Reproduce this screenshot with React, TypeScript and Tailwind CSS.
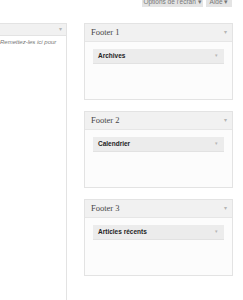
export default function App() {
  const footers = [
    { title: 'Footer', num: '1', widget: 'Archives' },
    { title: 'Footer', num: '2', widget: 'Calendrier' },
    { title: 'Footer', num: '3', widget: 'Articles récents' },
  ];

  return (
    <div className="w-[243px] h-[300px] bg-white overflow-hidden flex flex-col font-['Liberation_Sans',Arial,sans-serif]">
      {/* screen options / help tabs, cut at the top */}
      <div className="h-[23px] flex justify-end items-start gap-[3px] pr-[11px]">
        <div className="-mt-[4px] h-[11px] w-[61px] bg-[#e4e4e4] text-[#777] text-[6.5px] leading-[7px] whitespace-nowrap flex items-end justify-center pb-[2px]">
          Options de l’écran ▾
        </div>
        <div className="-mt-[4px] h-[11px] w-[26px] bg-[#e4e4e4] text-[#777] text-[6.5px] leading-[7px] whitespace-nowrap flex items-end justify-center pb-[2px]">
          Aide ▾
        </div>
      </div>

      <div className="flex-1 flex">
        {/* inactive widgets column */}
        <div className="w-[67px] border-r border-[#e3e3e3] flex flex-col bg-white">
          <div className="h-[13px] bg-[#f1f1f1] border-y border-[#e3e3e3] flex items-center justify-end pr-[4px]">
            <span className="text-[6px] text-[#b5b5b5]">▾</span>
          </div>
          <p className="mt-[2px] text-[6px] italic text-[#777] whitespace-nowrap">Remettez-les ici pour</p>
        </div>

        {/* sidebars */}
        <div className="ml-[17px] w-[149px] flex flex-col gap-[11px]">
          {footers.map(f => (
            <div key={f.num} className="h-[77px] border border-[#e3e3e3] bg-[#fcfcfc] flex flex-col">
              <div className="h-[18px] bg-[#f1f1f1] border-b border-[#e6e6e6] flex items-center justify-between pl-[6px] pr-[5px]">
                <span className="font-['Liberation_Serif',Georgia,serif] text-[8.5px] text-[#464646]">
                  {f.title} {f.num}
                </span>
                <span className="text-[6px] text-[#b5b5b5]">▾</span>
              </div>
              <div className="mt-[7px] mx-[8px] h-[15px] bg-[#ececec] border-b border-[#e2e2e2] flex items-center justify-between pl-[5px] pr-[6px]">
                <span className="text-[6.5px] font-bold text-[#222]">{f.widget}</span>
                <span className="text-[5px] text-[#b5b5b5]">▾</span>
              </div>
            </div>
          ))}
        </div>
      </div>
    </div>
  );
}
